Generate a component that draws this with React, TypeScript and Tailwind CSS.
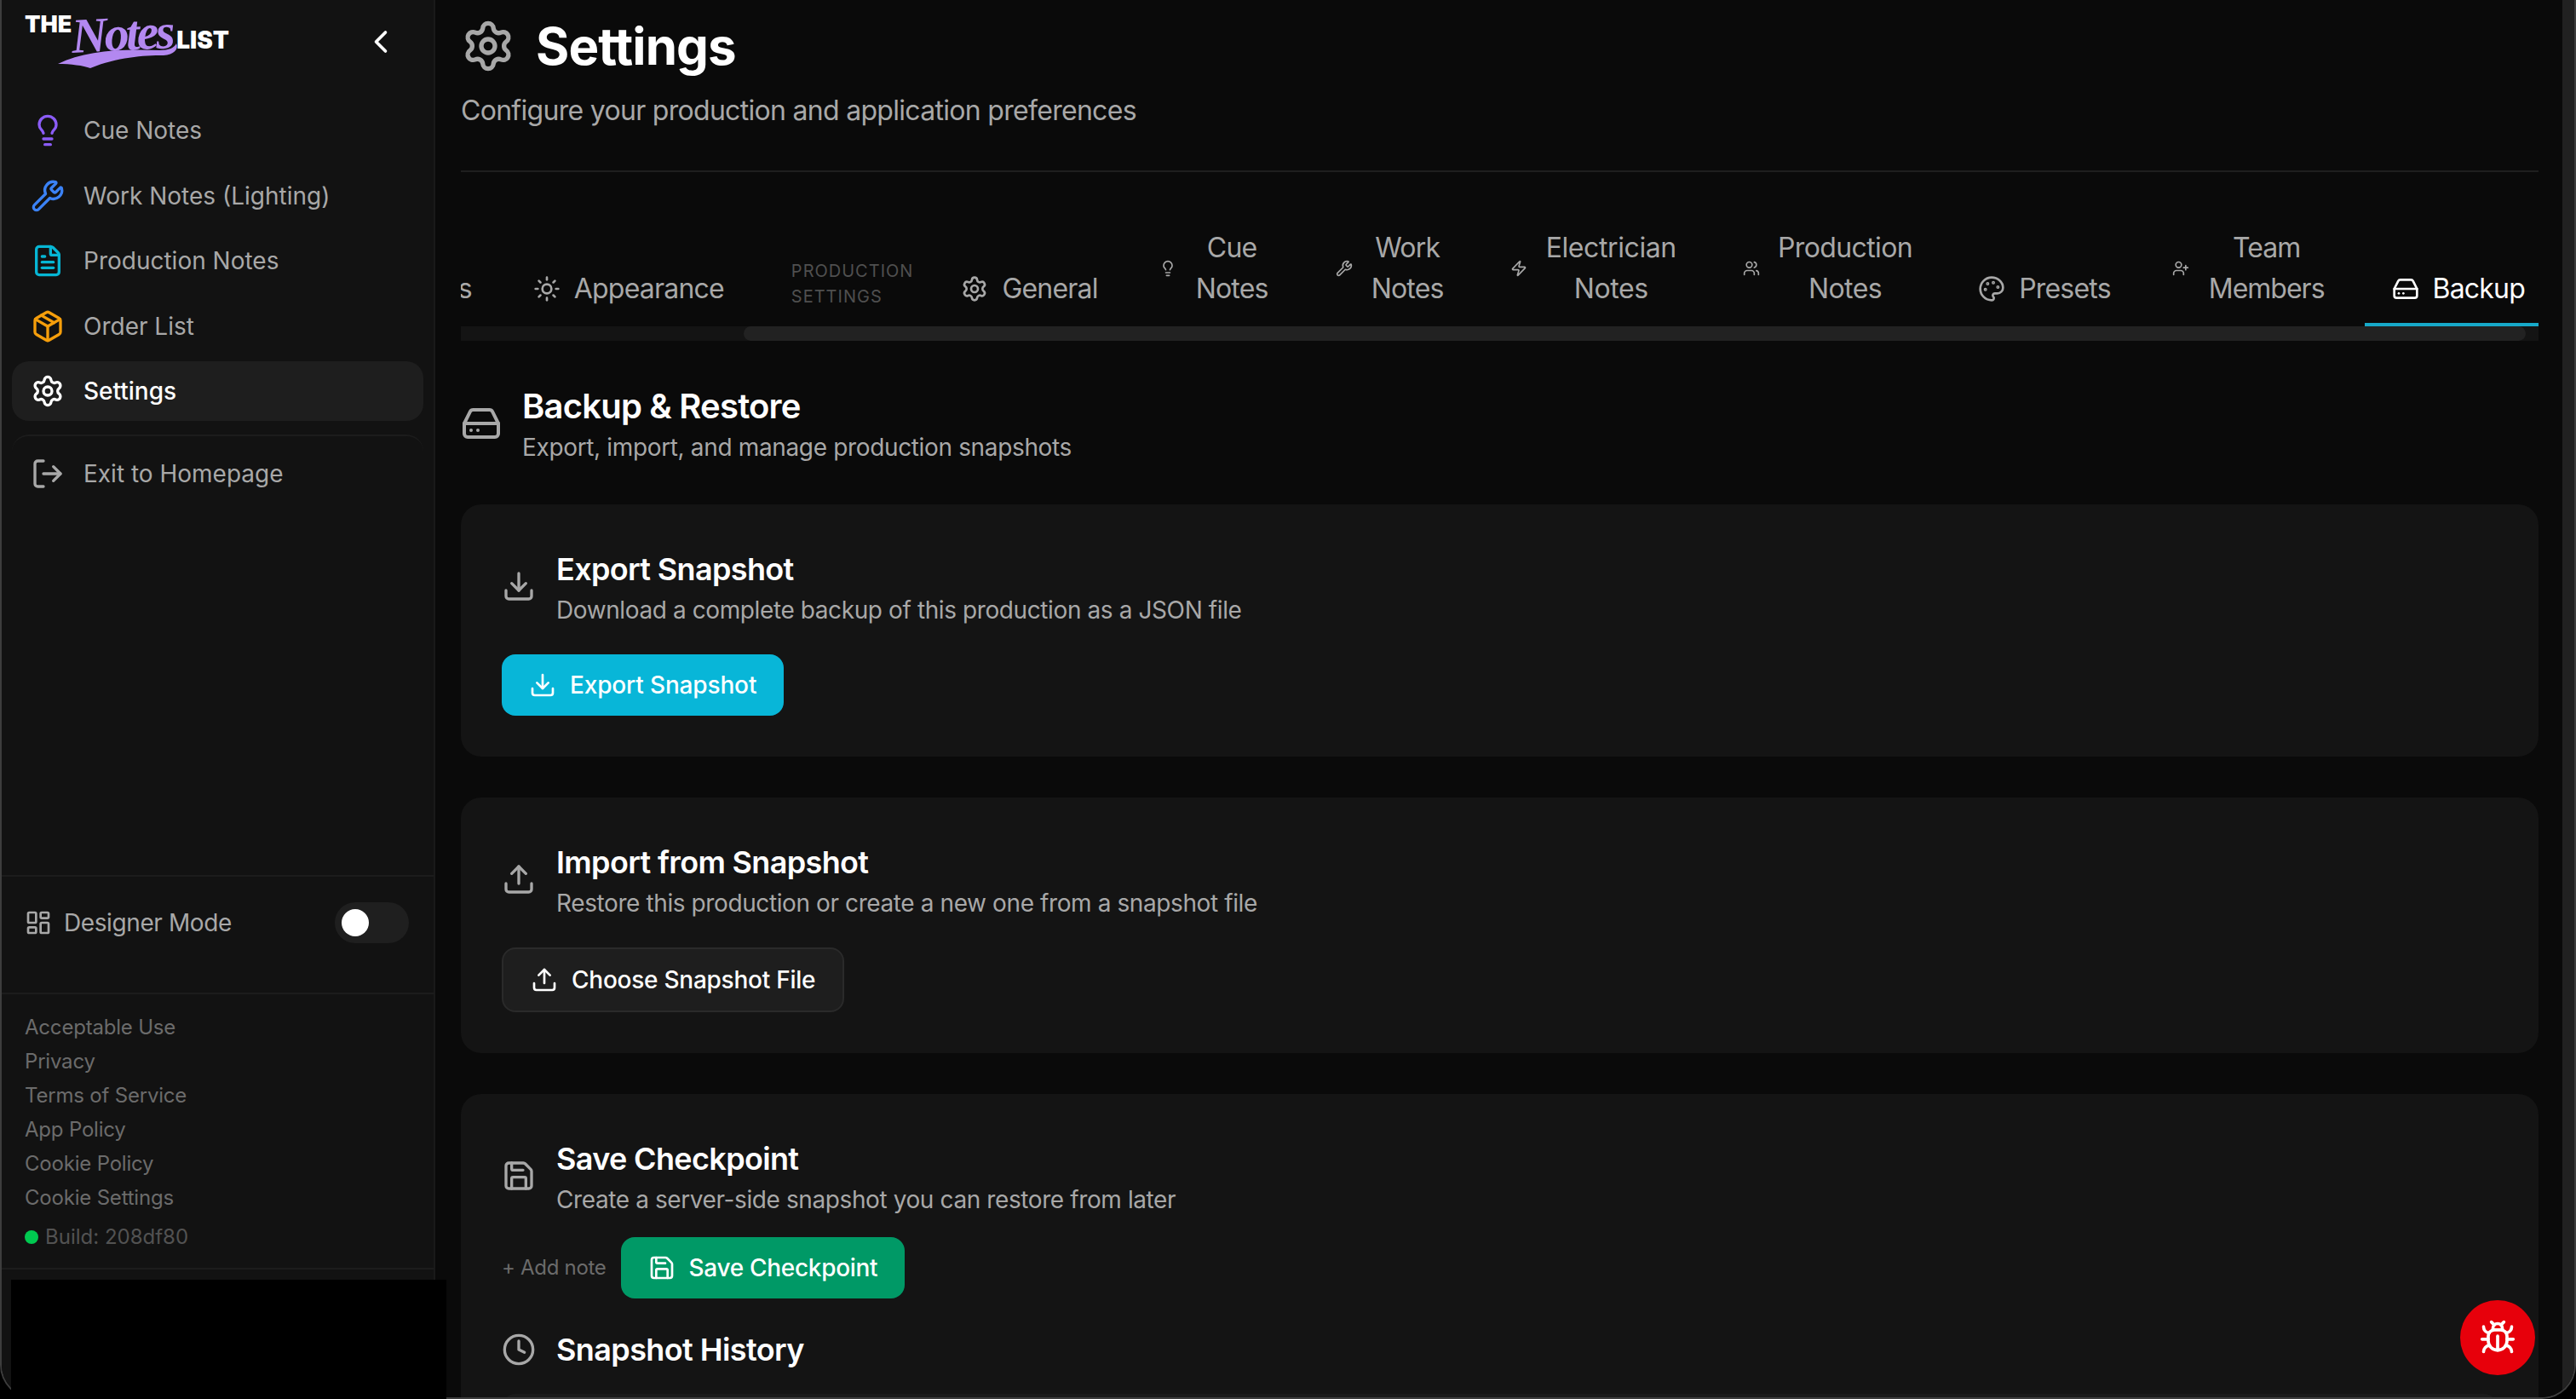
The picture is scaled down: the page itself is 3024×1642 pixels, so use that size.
import React from 'react';
import {
  Bug,
  ChevronLeft,
  Clock,
  Download,
  FileText,
  HardDrive,
  LayoutDashboard,
  Lightbulb,
  LogOut,
  Package,
  Palette,
  Save,
  Settings,
  Sun,
  Upload,
  UserPlus,
  Users,
  Wrench,
  Zap,
} from 'lucide-react';

const navItems = [
  { label: 'Cue Notes', icon: Lightbulb, iconClass: 'text-[#8b5cf6]' },
  { label: 'Work Notes (Lighting)', icon: Wrench, iconClass: 'text-[#3b82f6]' },
  { label: 'Production Notes', icon: FileText, iconClass: 'text-[#06b6d4]' },
  { label: 'Order List', icon: Package, iconClass: 'text-[#f59e0b]' },
];

const legalLinks = ['Acceptable Use', 'Privacy', 'Terms of Service', 'App Policy', 'Cookie Policy', 'Cookie Settings'];

const Logo: React.FC = () => (
  <div className="relative flex h-[70px] w-[240px] items-start">
    <span className="mt-[1px] text-[27px] leading-[36px] font-black text-white">THE</span>
    <span className="relative -rotate-3 font-['Liberation_Serif',serif] text-[58px] leading-[60px] font-bold tracking-[-3.5px] text-[#b388f0] italic">
      Notes
    </span>
    <span className="mt-[19px] ml-[5px] text-[28px] leading-[36px] font-black text-white">LIST</span>
    <svg className="absolute top-[40px] left-[39px]" width="142" height="32" viewBox="0 0 142 32">
      <path d="M0 25 C30 10 70 7 120 9 C130 9 137 6 139 1 C142 8 136 14 124 15 C100 15 70 17 38 30 C30 27 15 25 0 25 Z" fill="#b388f0" />
    </svg>
  </div>
);

const Sidebar: React.FC = () => (
  <aside className="flex h-full w-[509px] shrink-0 flex-col border-r-2 border-[#1a1a1a] bg-[#121212]">
    <div className="flex h-[118px] shrink-0 items-start justify-between pt-[10px] pr-[40px] pl-[27px]">
      <Logo />
      <ChevronLeft size={44} className="mt-[17px] text-white" />
    </div>
    <nav className="flex flex-col gap-[6.5px] px-[12px]">
      {navItems.map((item) => (
        <div key={item.label} className="flex h-[70px] items-center gap-[22px] pl-[22px] text-[28px] text-[#a8a8a8]">
          <item.icon size={40} className={item.iconClass} />
          {item.label}
        </div>
      ))}
      <div className="flex h-[70px] items-center gap-[22px] rounded-[20px] bg-[#1e1e1e] pl-[22px] text-[28px] font-medium text-white">
        <Settings size={40} />
        Settings
      </div>
    </nav>
    <div className="mx-[12px] mt-[16px] rounded-t-[20px] border-t-2 border-[#1c1c1c] pt-[9px]">
      <div className="flex h-[70px] items-center gap-[22px] pl-[22px] text-[28px] text-[#a8a8a8]">
        <LogOut size={40} />
        Exit to Homepage
      </div>
    </div>
    <div className="mt-auto flex h-[138px] items-start justify-between border-t-2 border-[#1c1c1c] pt-[30px] pr-[29px] pl-[27px]">
      <div className="flex h-[48px] items-center gap-[14px] text-[28px] tracking-[-0.4px] text-[#a8a8a8]">
        <LayoutDashboard size={32} />
        Designer Mode
      </div>
      <div className="flex h-[48px] w-[87px] items-center rounded-full bg-[#1f1f1f] pl-[8px]">
        <div className="h-[32px] w-[32px] rounded-full bg-white" />
      </div>
    </div>
    <div className="h-[323px] border-t-2 border-[#1c1c1c] pt-[19px] pl-[27px] text-[24px] leading-[40px] tracking-[-0.2px] text-[#6b6b6b]">
      {legalLinks.map((link) => (
        <div key={link}>{link}</div>
      ))}
      <div className="mt-[6px] flex items-center gap-[8px] tracking-normal text-[#525252]">
        <div className="h-[16px] w-[16px] rounded-full bg-[#00c950]" />
        Build: 208df80
      </div>
    </div>
    <div className="h-[152px] border-t-2 border-[#1c1c1c]" />
  </aside>
);

const Tab: React.FC<{ icon: React.ElementType; lines: string[]; small?: boolean; active?: boolean; textClass?: string }> = ({
  icon: Icon,
  lines,
  small,
  active,
  textClass,
}) => (
  <div
    className={`flex shrink-0 items-center gap-4 border-b-4 pt-4 pb-4 pl-8 text-[32px] leading-[48px] tracking-[-0.8px] ${
      active ? 'border-[#17a9c9] pr-4 text-white' : 'border-transparent pr-8 text-[#a8a8a8]'
    }`}
  >
    <Icon size={small ? 20 : 32} className="shrink-0" />
    <div className={`text-center ${textClass ?? ''}`}>
      {lines.map((line) => (
        <div key={line}>{line}</div>
      ))}
    </div>
  </div>
);

const SectionCard: React.FC<{ icon: React.ElementType; title: string; description: string; children: React.ReactNode; last?: boolean }> = ({
  icon: Icon,
  title,
  description,
  children,
  last,
}) => (
  <section className={`rounded-[24px] bg-[#141414] px-[48px] pt-[48px] ${last ? '' : 'pb-[48px]'}`}>
    <div className="flex items-center gap-[24px]">
      <Icon size={40} className="shrink-0 text-[#a8a8a8]" />
      <div>
        <h3 className="text-[36px] leading-[56px] font-semibold tracking-[-0.65px] text-white">{title}</h3>
        <p className="text-[28px] leading-[40px] tracking-[-0.4px] text-[#a8a8a8]">{description}</p>
      </div>
    </div>
    {children}
  </section>
);

export default function App() {
  return (
    <div className="relative h-[1642px] w-[3024px] overflow-hidden bg-black font-['Inter',sans-serif]">
      <div className="flex h-full w-full overflow-hidden rounded-b-[40px] border-x-2 border-b-2 border-[#3d3d3d]">
        <Sidebar />
        <main className="flex h-full min-w-0 flex-1 flex-col overflow-hidden bg-[#0a0a0a] pr-[28px] pl-[30px]">
          <header className="shrink-0 border-b-2 border-[#1f1f1f] pt-[22px] pb-[46px]">
            <div className="flex h-[64px] items-center gap-[24px]">
              <Settings size={64} className="text-[#a8a8a8]" />
              <h1 className="text-[60px] leading-[64px] font-bold tracking-[-0.9px] text-white">Settings</h1>
            </div>
            <p className="mt-[20px] text-[32px] leading-[48px] tracking-[-0.7px] text-[#a8a8a8]">Configure your production and application preferences</p>
          </header>

          <div className="mt-[49px] flex shrink-0 items-end justify-end gap-2 overflow-hidden">
            <Tab icon={Settings} lines={['Shortcuts']} />
            <Tab icon={Sun} lines={['Appearance']} />
            <div className="flex shrink-0 flex-col pr-[16px] pb-[20px] pl-[39px] text-[20px] leading-[30px] tracking-[1px] text-[#4f4f4f]">
              <span>PRODUCTION</span>
              <span>SETTINGS</span>
            </div>
            <Tab icon={Settings} lines={['General']} />
            <Tab icon={Lightbulb} lines={['Cue', 'Notes']} small textClass="px-[7px]" />
            <Tab icon={Wrench} lines={['Work', 'Notes']} small textClass="px-[6px]" />
            <Tab icon={Zap} lines={['Electrician', 'Notes']} small textClass="px-[6px] tracking-[-0.4px]" />
            <Tab icon={Users} lines={['Production', 'Notes']} small textClass="px-[5px] tracking-[-0.6px]" />
            <Tab icon={Palette} lines={['Presets']} />
            <Tab icon={UserPlus} lines={['Team', 'Members']} small textClass="px-[7px] tracking-[-1px]" />
            <Tab icon={HardDrive} lines={['Backup']} active />
          </div>
          <div className="h-[17px] shrink-0 bg-[#141414] pr-[15px] pl-[332px]">
            <div className="h-full rounded-l-full rounded-r-full bg-[#222222]" />
          </div>

          <div className="mt-[49px] flex shrink-0 items-center gap-[24px]">
            <HardDrive size={48} className="shrink-0 text-[#a8a8a8]" />
            <div>
              <h2 className="text-[40px] leading-[56px] font-semibold tracking-[-0.8px] text-white">Backup &amp; Restore</h2>
              <p className="text-[28px] leading-[40px] tracking-[-0.35px] text-[#a8a8a8]">Export, import, and manage production snapshots</p>
            </div>
          </div>

          <div className="mt-[47px] flex shrink-0 flex-col gap-[48px]">
            <SectionCard icon={Download} title="Export Snapshot" description="Download a complete backup of this production as a JSON file">
              <button className="mt-[32px] flex h-[72px] items-center gap-4 rounded-[16px] bg-[#08b6d8] px-8 text-[28px] font-medium tracking-[-0.15px] text-white">
                <Download size={32} />
                Export Snapshot
              </button>
            </SectionCard>

            <SectionCard icon={Upload} title="Import from Snapshot" description="Restore this production or create a new one from a snapshot file">
              <button className="mt-[32px] flex h-[76px] items-center gap-4 rounded-[16px] border-2 border-[#2a2a2a] bg-[#1e1e1e] px-8 text-[28px] font-medium tracking-[-0.25px] text-white">
                <Upload size={32} />
                Choose Snapshot File
              </button>
            </SectionCard>

            <SectionCard icon={Save} title="Save Checkpoint" description="Create a server-side snapshot you can restore from later" last>
              <div className="mt-[24px] flex items-center gap-[17px]">
                <span className="text-[24px] tracking-[-0.3px] text-[#6b6b6b]">+ Add note</span>
                <button className="flex h-[72px] items-center gap-4 rounded-[16px] bg-[#009966] px-8 text-[28px] font-medium tracking-[-0.3px] text-white">
                  <Save size={32} />
                  Save Checkpoint
                </button>
              </div>
              <div className="mt-[32px] flex items-center gap-[24px]">
                <Clock size={40} className="text-[#a8a8a8]" />
                <h3 className="text-[36px] leading-[56px] font-semibold tracking-[-0.6px] text-white">Snapshot History</h3>
              </div>
              <div className="mt-[24px] h-[60px] rounded-t-[16px] bg-[#1a1a1a]" />
            </SectionCard>
          </div>
        </main>
        <div className="h-full w-[14px] shrink-0 bg-[#212121]" />
      </div>

      <div className="absolute top-[1502px] left-[13px] h-[140px] w-[511px] bg-black" />
      <button className="absolute right-[48px] bottom-[28px] flex h-[88px] w-[88px] items-center justify-center rounded-full bg-[#e7000b] text-white">
        <Bug size={44} />
      </button>
    </div>
  );
}
